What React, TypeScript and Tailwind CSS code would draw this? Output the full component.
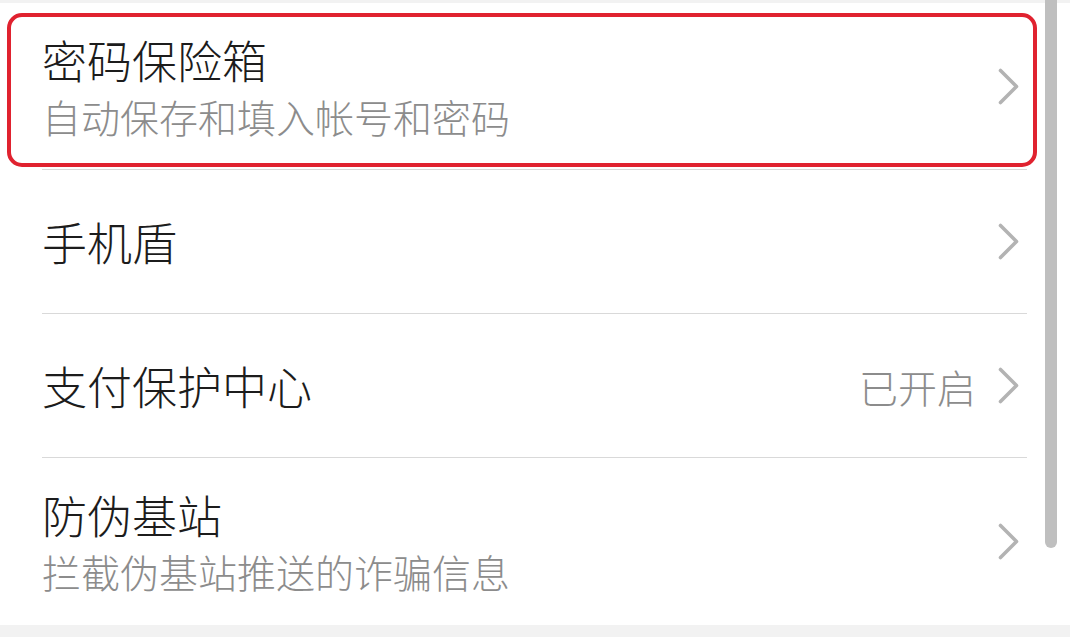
import React from "react"

type Row = {
    title: string
    subtitle?: string
    value?: string
    highlighted?: boolean
}

const rows: Row[] = [
    { title: "密码保险箱", subtitle: "自动保存和填入帐号和密码", highlighted: true },
    { title: "手机盾" },
    { title: "支付保护中心", value: "已开启" },
    { title: "防伪基站", subtitle: "拦截伪基站推送的诈骗信息" },
]

function Chevron() {
    return (
        <svg width="21" height="37" viewBox="0 0 21 37" fill="none" className="shrink-0">
            <path d="M2.5 2.5 L18.5 18.5 L2.5 34.5" stroke="#b3b3b3" strokeWidth="3.6" strokeLinecap="round" strokeLinejoin="round" />
        </svg>
    )
}

function ListRow({ row, last }: { row: Row; last: boolean }) {
    const twoLine = !!row.subtitle
    return (
        <div className={`relative ${last ? "" : "border-b border-[#d9d9d9]"}`}>
            {/* annotation frame */}
            {row.highlighted && (
                <div className="pointer-events-none absolute -left-[35px] top-[10px] bottom-[2px] -right-[10px] rounded-[15px] border-[4px] border-[#e0222f]" />
            )}
            <div className={`flex items-center pr-[8px] ${twoLine ? "h-[166px]" : "h-[143px]"}`}>
                <div className={`flex-1 flex flex-col ${twoLine ? "self-start pt-[29px]" : ""}`}>
                    <div className="text-[45px] leading-[56px] font-light text-[#1c1c1c]">{row.title}</div>
                    {row.subtitle && (
                        <div className="mt-[3px] text-[39px] leading-[50px] font-light text-[#8c8c8c]">{row.subtitle}</div>
                    )}
                </div>
                {row.value && <span className="mr-[22px] text-[39px] leading-[50px] font-light text-[#8c8c8c]">{row.value}</span>}
                <Chevron />
            </div>
        </div>
    )
}

export default function App() {
    return (
        <div
            className="w-[1070px] h-[637px] bg-white flex flex-col overflow-hidden"
            style={{ fontFamily: '"Noto Sans CJK SC", "Noto Sans", sans-serif' }}
        >
            <div className="h-[3px] bg-[#f2f2f2]" />
            <div className="flex flex-1">
                {/* list */}
                <div className="flex-1 pl-[42px] pr-[18px]">
                    {rows.map((row, i) => (
                        <ListRow key={row.title} row={row} last={i === rows.length - 1} />
                    ))}
                </div>
                {/* scrollbar */}
                <div className="w-[12px] h-[548px] -mt-[3px] rounded-b-[6px] bg-[#bfbfbf]" />
                <div className="w-[13px]" />
            </div>
            <div className="h-[12px] bg-[#f2f2f2]" />
        </div>
    )
}
